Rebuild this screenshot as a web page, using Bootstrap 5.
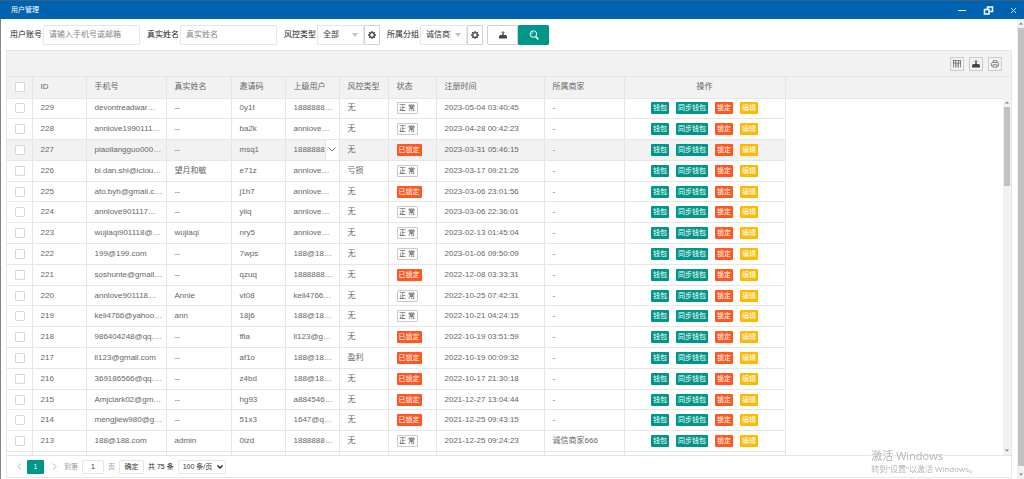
<!DOCTYPE html>
<html lang="zh-CN">
<head>
<meta charset="utf-8">
<meta name="viewport" content="width=device-width, initial-scale=1">
<title>用户管理</title>
<link href="https://cdn.jsdelivr.net/npm/bootstrap@5.3.0/dist/css/bootstrap.min.css" rel="stylesheet">
<style>
  :root { --line: #e6e6e6; --teal: #009688; --orange: #ff5722; --amber: #ffb800; --blue: #0063b1; }
  body { font-family: "Liberation Sans", "Noto Sans CJK SC", sans-serif; font-size: 8px; line-height: 12px; color: #666; background: #fff; }
  button, input, select { font-family: inherit; }
  svg { display: block; }

  .titlebar { background: var(--blue); border-top: 1px solid #38617f; height: 19px; font-size: 7px; color: #fff; padding: 0 7px 0 11px; }
  .win-btn { border: 0; background: none; padding: 0; color: #fff; }
  .win-body { border-left: 1px solid #83858d; min-height: 0; }
  .content { padding: 0 5px 1px 5px; min-height: 0; min-width: 0; }

  .search { height: 31px; padding-left: 4px; color: #333; }
  .search .fields { gap: 7px; }
  .search label { width: 33px; white-space: nowrap; color: #222; }
  .ctl { height: 20px; min-height: 0; border: 1px solid var(--line); border-radius: 1px; font-size: 8px; line-height: 12px; padding: 0 5px; color: #333; background-color: #fff; }
  .ctl::placeholder { color: #858585; }
  input.ctl { width: 97px; }
  select.ctl { width: 47px; padding-right: 15px; background-position: right 5px center; background-size: 6px 4px; text-overflow: clip;
    --bs-form-select-bg-img: url("data:image/svg+xml,%3Csvg xmlns='http://www.w3.org/2000/svg' viewBox='0 0 6 4'%3E%3Cpath d='M0 0h6L3 4z' fill='%23c2c2c2'/%3E%3C/svg%3E"); }
  .tool { width: 16px; height: 20px; padding: 0; border: 1px solid #d2d2d2; border-radius: 1px; background: #fff; color: #444; }
  .tool.wide { width: 31px; }
  .tool.go { background: var(--teal); border-color: var(--teal); color: #fff; }

  .panel { border: 1px solid var(--line); min-height: 0; }
  .panel-tools { height: 26px; background: #f2f2f2; border-bottom: 1px solid var(--line); padding-right: 9px; gap: 5px; }
  .mini { width: 14px; height: 14px; padding: 0; border: 1px solid #ccc; border-radius: 0; color: #444; background: none; }
  .grid-area { min-height: 0; overflow: hidden; }

  .users { table-layout: fixed; width: 100%; height: 396px; margin: 0; color: #666; --bs-table-color: #666; --bs-table-bg: #fff; }
  .users > :not(caption) > * > * { padding: 0 0 0 8px; border-width: 0 1px 1px 0; border-color: var(--line); font-weight: 400; height: 20px; vertical-align: middle; white-space: nowrap; color: #666; }
  .users > thead > tr > th { background: #f2f2f2; height: 21px; }
  .users > tbody > tr > td:last-child { border-width: 0; background: #fff; }
  .users > thead > tr > th:last-child { border-right-width: 0; }
  .users > tbody > tr.hovered > td { background: #f2f2f2; }
  .users > tbody > tr.hovered > td:last-child { background: #fff; }
  .users .form-check-input { display: block; width: 10px; height: 10px; min-height: 0; margin: 0; border: 1px solid #d8d8d8; border-radius: 1px; }
  .more { right: 0; top: 0; bottom: 0; width: 14px; padding: 0; border: 0; border-left: 1px solid var(--line); background: #fff; color: #777; }
  .tag { display: block; height: 12px; padding: 0 1px; font-size: 7px; line-height: 10px; border: 1px solid transparent; border-radius: 1px; color: #fff; white-space: nowrap; }
  .tag.plain { border-color: #c9c9c9; background: #fff; color: #444; width: 21px; }
  .tag.teal { background: var(--teal); }
  .tag.orange { background: var(--orange); }
  .tag.amber { background: var(--amber); }
  .tag.state { width: 25px; }
  .ops { gap: 7px; padding-right: 8px; }

  .pager { height: 22px; border-top: 1px solid var(--line); padding-left: 6px; font-size: 7px; color: #999; gap: 4px; }
  .pager .page-btn { width: 16px; height: 14px; padding: 0; border: 0; border-radius: 1px; background: none; font-size: 7px; color: #b0b0b0; }
  .pager .page-btn.current { background: var(--teal); color: #fff; width: 17px; }
  .pager .ctl { height: 14px; font-size: 7px; padding: 0 3px; }
  .pager input.ctl { width: 22px; text-align: center; }
  .pager button.ctl { width: 25px; }
  .pager select.ctl { width: 48px; padding-left: 4px; background-position: right 2px center; background-size: 6px 4px;
    --bs-form-select-bg-img: url("data:image/svg+xml,%3Csvg xmlns='http://www.w3.org/2000/svg' viewBox='0 0 6 4'%3E%3Cpath d='M.5 .5L3 3L5.5 .5' fill='none' stroke='%23222' stroke-width='1.4'/%3E%3C/svg%3E"); }

  .bar { width: 7px; background: #f1f1f1; }
  .bar .thumb { background: #c1c1c1; margin: 0 0 0 1px; }
  .bar .cap { height: 9px; display: flex; align-items: center; justify-content: center; color: #777; flex: none; }
  .bar.inner { top: 21px; right: 0; bottom: 0; width: 8px; }
  .bar.inner .thumb { height: 22%; margin-right: 1px; }

  .watermark { right: 47px; bottom: 4px; color: #b4b4b4; font-family: "Open Sans", "Noto Sans CJK SC", sans-serif; pointer-events: none; }
  .watermark .big { font-size: 11px; line-height: 14px; }
</style>
</head>
<body class="vh-100 d-flex flex-column overflow-hidden">

<svg class="d-none" aria-hidden="true">
  <symbol id="i-up" viewBox="0 0 6 4"><path d="M0 3.5h6L3 .5z" fill="currentColor"/></symbol>
  <symbol id="i-down" viewBox="0 0 6 4"><path d="M0 .5h6L3 3.5z" fill="currentColor"/></symbol>
  <symbol id="i-gear" viewBox="0 0 16 16"><path fill="none" stroke="currentColor" stroke-width="2.6" d="M8 3.4a4.600 4.600 0 1 0 0 9.200a4.600 4.600 0 1 0 0-9.200z"/><path stroke="currentColor" stroke-width="2.6" d="M8 0v3M8 13v3M0 8h3M13 8h3M2.3 2.3l2.2 2.2M11.5 11.5l2.2 2.2M2.3 13.7l2.2-2.2M11.5 4.5l2.2-2.2"/></symbol>
  <symbol id="i-export" viewBox="0 0 16 16"><path fill="currentColor" d="M0 11l2-3h12l2 3v4H0z"/><path fill="currentColor" opacity=".7" d="M8 0l4 4H10v4H6V4H4z"/></symbol>
  <symbol id="i-search" viewBox="0 0 16 16"><circle cx="7" cy="6.5" r="5.2" fill="none" stroke="currentColor" stroke-width="1.6"/><path d="M10.8 10.6L15 15" stroke="currentColor" stroke-width="2.4"/><path d="M4.500 7a2.500 2.500 0 0 1 2.300-3" fill="none" stroke="currentColor"/></symbol>
  <symbol id="i-cols" viewBox="0 0 16 16"><path fill="none" stroke="currentColor" stroke-width="1.200" d="M0 1h16M0 6h16M1 1v14M5 1v14M11 1v14M15 1v14M8 6v9"/></symbol>
  <symbol id="i-print" viewBox="0 0 16 16"><path fill="none" stroke="currentColor" stroke-width="1.200" d="M4 5V1.500h8V5M3.500 12H1V6.500L3 5h10l2 1.500V12h-2.500M4 9.500h8v5H4z"/></symbol>
</svg>

<header class="titlebar d-flex align-items-center flex-shrink-0">
  <span class="me-auto">用户管理</span>
  <div class="d-flex align-items-center gap-3">
    <button class="win-btn" aria-label="最小化"><svg width="9" height="9" viewBox="0 0 9 9"><path d="M0 4.500h8" stroke="#fff"/></svg></button>
    <button class="win-btn" aria-label="还原"><svg width="11" height="9" viewBox="0 0 11 9"><path d="M4.500 3V1H9.500V5.500H6.500M1.500 3.500H6V8H1.500z" fill="none" stroke="#fff" stroke-width="1.500"/></svg></button>
    <button class="win-btn" aria-label="关闭"><svg width="7" height="7" viewBox="0 0 7 7"><path d="M1 1l5 5M6 1L1 6" stroke="#d5e6f3"/></svg></button>
  </div>
</header>

<div class="win-body d-flex flex-fill">
  <main class="content d-flex flex-column flex-fill">
    <form class="search d-flex align-items-center flex-shrink-0" onsubmit="return false">
      <div class="fields d-flex">
        <div class="d-flex align-items-center"><label for="acc">用户账号</label><input id="acc" class="ctl" type="text" placeholder="请输入手机号或邮箱"></div>
        <div class="d-flex align-items-center"><label for="rname">真实姓名</label><input id="rname" class="ctl" type="text" placeholder="真实姓名"></div>
        <div class="d-flex align-items-center"><label for="risk">风控类型</label><select id="risk" class="form-select ctl"><option>全部</option></select>
          <button class="btn tool d-flex align-items-center justify-content-center" type="button" aria-label="风控设置"><svg width="8" height="8"><use href="#i-gear"/></svg></button></div>
        <div class="d-flex align-items-center"><label for="grp">所属分组</label><select id="grp" class="form-select ctl"><option>诚信商家</option></select>
          <button class="btn tool d-flex align-items-center justify-content-center" type="button" aria-label="分组设置"><svg width="8" height="8"><use href="#i-gear"/></svg></button></div>
      </div>
      <div class="d-flex ms-1">
        <button class="btn tool wide d-flex align-items-center justify-content-center" type="button" aria-label="导出"><svg width="8" height="8"><use href="#i-export"/></svg></button>
        <button class="btn tool wide go d-flex align-items-center justify-content-center" type="submit" aria-label="搜索"><svg width="10" height="10"><use href="#i-search"/></svg></button>
      </div>
    </form>

    <section class="panel d-flex flex-column flex-fill">
      <div class="panel-tools d-flex align-items-center justify-content-end flex-shrink-0">
        <button class="btn mini d-flex align-items-center justify-content-center" aria-label="筛选列"><svg width="8" height="8"><use href="#i-cols"/></svg></button>
        <button class="btn mini d-flex align-items-center justify-content-center" aria-label="导出"><svg width="8" height="8"><use href="#i-export"/></svg></button>
        <button class="btn mini d-flex align-items-center justify-content-center" aria-label="打印"><svg width="8" height="8"><use href="#i-print"/></svg></button>
      </div>
      <div class="grid-area position-relative flex-fill">
        <table class="table users">
          <colgroup><col style="width:25px"><col style="width:54px"><col style="width:80px"><col style="width:65px"><col style="width:54px"><col style="width:54px"><col style="width:49px"><col style="width:48px"><col style="width:108px"><col style="width:80px"><col style="width:161px"><col></colgroup>
          <thead><tr><th><input class="form-check-input" type="checkbox" aria-label="全选"></th><th>ID</th><th>手机号</th><th>真实姓名</th><th>邀请码</th><th>上级用户</th><th>风控类型</th><th>状态</th><th>注册时间</th><th>所属商家</th><th class="text-center pe-2">操作</th><th></th></tr></thead>
          <tbody id="rows"></tbody>
        </table>
        <div class="bar inner position-absolute d-flex flex-column">
          <div class="cap"><svg width="4" height="3"><use href="#i-up"/></svg></div>
          <div class="thumb"></div>
          <div class="cap mt-auto"><svg width="4" height="3"><use href="#i-down"/></svg></div>
        </div>
      </div>
      <nav class="pager d-flex align-items-center flex-shrink-0" aria-label="分页">
        <div class="d-flex align-items-center">
          <button class="page-btn me-1 text-start ps-1" style="width:10px" aria-label="上一页"><svg width="5" height="7" viewBox="0 0 5 7"><path d="M4 .5L1 3.500L4 6.500" fill="none" stroke="currentColor"/></svg></button>
          <button class="page-btn current">1</button>
          <button class="page-btn ps-2" aria-label="下一页"><svg width="5" height="7" viewBox="0 0 5 7"><path d="M1 .5L4 3.500L1 6.500" fill="none" stroke="currentColor"/></svg></button>
        </div>
        <label for="pg">到第</label>
        <input id="pg" class="ctl" type="text" value="1">
        <span>页</span>
        <button class="ctl" type="button">确定</button>
        <span class="text-dark">共 75 条</span>
        <select class="form-select ctl" aria-label="每页条数"><option>100 条/页</option></select>
      </nav>
    </section>
  </main>

  <div class="bar d-flex flex-column flex-shrink-0">
    <div class="cap"><svg width="4" height="3"><use href="#i-up"/></svg></div>
    <div class="thumb flex-fill"></div>
    <div class="cap mt-1"><svg width="4" height="3"><use href="#i-down"/></svg></div>
  </div>
</div>

<div class="watermark position-fixed">
  <div class="big">激活 Windows</div>
  <div>转到“设置”以激活 Windows。</div>
</div>

<script src="https://cdn.jsdelivr.net/npm/bootstrap@5.3.0/dist/js/bootstrap.bundle.min.js"></script>
<script>
  // id, phone, name, invite code, parent, risk, locked, registered, merchant
  const users = [
    [229, 'devontreadwar…', '--', '0y1t', '1888888…', '无', 0, '2023-05-04 03:40:45', '-'],
    [228, 'annlove1990111…', '--', 'ba2k', 'annlove…', '无', 0, '2023-04-28 00:42:23', '-'],
    [227, 'piaoliangguo000…', '--', 'msq1', '1888888.', '无', 1, '2023-03-31 05:46:15', '-'],
    [226, 'bi.dan.shi@iclou…', '望月和敏', 'e71z', 'annlove…', '亏损', 0, '2023-03-17 09:21:26', '-'],
    [225, 'afo.byh@gmail.c…', '--', 'j1h7', 'annlove…', '无', 1, '2023-03-06 23:01:56', '-'],
    [224, 'annlove901117…', '--', 'yiiq', 'annlove…', '无', 0, '2023-03-06 22:36:01', '-'],
    [223, 'wujiaqi901118@…', 'wujiaqi', 'nry5', 'annlove…', '无', 0, '2023-02-13 01:45:04', '-'],
    [222, '199@199.com', '--', '7wps', '188@18…', '无', 0, '2023-01-06 09:50:09', '-'],
    [221, 'soshunte@gmail…', '--', 'qzuq', '1888888…', '无', 1, '2022-12-08 03:33:31', '-'],
    [220, 'annlove901118…', 'Annie', 'vt08', 'keli4766…', '无', 0, '2022-10-25 07:42:31', '-'],
    [219, 'keli4766@yahoo…', 'ann', '18j6', '188@18…', '无', 0, '2022-10-21 04:24:15', '-'],
    [218, '986404248@qq.…', '--', 'ffla', 'll123@g…', '无', 1, '2022-10-19 03:51:59', '-'],
    [217, 'll123@gmail.com', '--', 'af1o', '188@18…', '盈利', 1, '2022-10-19 00:09:32', '-'],
    [216, '369186566@qq.…', '--', 'z4bd', '188@18…', '无', 1, '2022-10-17 21:30:18', '-'],
    [215, 'Amjclark02@gm…', '--', 'hg93', 'a884546…', '无', 1, '2021-12-27 13:04:44', '-'],
    [214, 'mengjiew980@g…', '--', '51x3', '1647@q…', '无', 1, '2021-12-25 09:43:15', '-'],
    [213, '188@188.com', 'admin', '0lzd', '1888888…', '无', 0, '2021-12-25 09:24:23', '诚信商家666']
  ];
  const more = '<button class="more position-absolute d-flex align-items-center justify-content-center" aria-label="展开"><svg width="8" height="5" viewBox="0 0 8 5"><path d="M.5 .5L4 4L7.500 .5" fill="none" stroke="currentColor"/></svg></button>';
  const ops = '<div class="ops d-flex justify-content-center"><button class="tag teal">钱包</button><button class="tag teal">同步钱包</button><button class="tag orange">锁定</button><button class="tag amber">编辑</button></div>';
  document.getElementById('rows').innerHTML = users.map(([id, phone, name, code, parent, risk, locked, time, shop]) =>
    `<tr class="${id === 227 ? 'hovered' : ''}"><td><input class="form-check-input" type="checkbox" aria-label="选择 ${id}"></td>
     <td>${id}</td><td>${phone}</td><td>${name}</td><td>${code}</td>
     <td class="position-relative">${parent}${id === 227 ? more : ''}</td><td>${risk}</td>
     <td>${locked ? '<button class="tag state orange">已锁定</button>' : '<button class="tag plain">正 常</button>'}</td>
     <td>${time}</td><td>${shop}</td><td>${ops}</td><td></td></tr>`).join('')
    + '<tr>' + '<td></td>'.repeat(12) + '</tr>';
</script>
</body>
</html>
